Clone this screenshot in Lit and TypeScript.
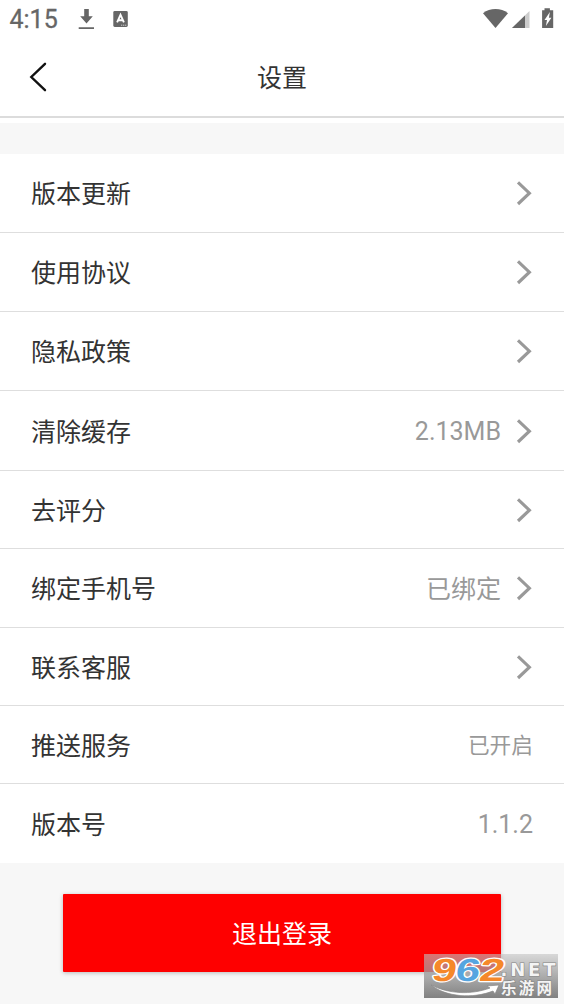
import { LitElement, html, css, svg, nothing } from "lit";
import { customElement, property } from "lit/decorators.js";

interface Row {
  label: string;
  value?: string;
  arrow?: boolean;
  small?: boolean;
  height: number;
}

const ROWS: Row[] = [
  { label: "版本更新", arrow: true, height: 79 },
  { label: "使用协议", arrow: true, height: 79 },
  { label: "隐私政策", arrow: true, height: 79 },
  { label: "清除缓存", value: "2.13MB", arrow: true, height: 80 },
  { label: "去评分", arrow: true, height: 78 },
  { label: "绑定手机号", value: "已绑定", arrow: true, height: 79 },
  { label: "联系客服", arrow: true, height: 78 },
  { label: "推送服务", value: "已开启", small: true, height: 78 },
  { label: "版本号", value: "1.1.2", height: 79 },
];

@customElement("status-bar")
class StatusBar extends LitElement {
  static styles = css`
    :host {
      display: flex;
      align-items: flex-start;
      height: 38px;
      color: #666;
    }
    .clock {
      font: 400 25px/28px Roboto, sans-serif;
      -webkit-text-stroke: 0.3px #666;
      width: 69px;
      padding: 6px 0 0 9.5px;
      box-sizing: border-box;
    }
    .left {
      flex: 1;
    }
    svg {
      display: block;
    }
  `;
  render() {
    return html`
      <div class="clock">4:15</div>
      <svg class="left" height="38" viewBox="69 0 200 38" preserveAspectRatio="xMinYMin" fill="#666">
        <path d="M84.2 9h4.6v7.3h4L86.5 23.4 80.2 16.3h4zM78.7 27.2h15.3v1.9H78.7z" />
        <rect x="113.3" y="11" width="14.5" height="16" rx="1.4" />
        <path d="M117.1 22.4l3.4-7.6 3.4 7.6M118.4 20.3h4.2" fill="none" stroke="#fff" stroke-width="1.9" />
        <path d="M121 25.2h6" stroke="#ccc" stroke-width="1" stroke-dasharray="1.3 .7" />
      </svg>
      <svg width="84" height="38" viewBox="480 0 84 38" fill="#666">
        <path d="M483 13.2C490 7.7 501 7.7 508 13.2L495.5 28z" />
        <path d="M529.5 11v17H512z" fill="#ccc" />
        <path d="M525 15.4V28H512z" />
        <path d="M544.5 8.2h5.4v2h3.3V28h-11.1V10.2h2.4z" />
        <path d="M549.9 12l-5.4 8.1h2.5l-1.1 5.8 5.5-8.2h-2.5z" fill="#fff" />
      </svg>
    `;
  }
}

@customElement("setting-row")
class SettingRow extends LitElement {
  @property({ attribute: false }) row!: Row;
  static styles = css`
    :host {
      display: flex;
      align-items: center;
      box-sizing: border-box;
      padding: 0 31px 0 31px;
      background: #fff;
      border-bottom: 1px solid #dedede;
      font: 25px/36px Roboto, "Noto Sans CJK SC", sans-serif;
      color: #333;
    }
    :host(:last-child) {
      border-bottom: 0;
    }
    .label {
      flex: 1;
      padding-top: 4px;
    }
    .value {
      color: #999;
      padding-top: 3px;
    }
    .small {
      font-size: 21.7px;
    }
    .arrow {
      margin: 0 1px 0 14px;
    }
  `;
  render() {
    const r = this.row;
    return html`
      <span class="label">${r.label}</span>
      ${r.value ? html`<span class="value ${r.small ? "small" : ""}">${r.value}</span>` : nothing}
      ${r.arrow
        ? html`<svg class="arrow" width="17" height="26" viewBox="0 0 17 26" fill="none">
            <path d="M3 2.4L14.4 13.2 3 24" stroke="#999" stroke-width="3.1" />
          </svg>`
        : nothing}
    `;
  }
}

@customElement("site-mark")
class SiteMark extends LitElement {
  static styles = css`
    :host {
      display: block;
      width: 134px;
      height: 44px;
      background: linear-gradient(rgba(195, 195, 195, 0.6), rgba(125, 125, 125, 0.97));
    }
    svg {
      display: block;
      overflow: visible;
    }
    .num {
      font: 700 32px "Liberation Sans", sans-serif;
      stroke: #fff;
      stroke-width: 2.4px;
      paint-order: stroke;
      stroke-linejoin: round;
    }
    .net {
      font: 700 18px "DejaVu Sans", sans-serif;
    }
    .cn {
      font: 700 15.5px "Liberation Sans", "Noto Sans CJK SC", sans-serif;
    }
    .light {
      fill: #f4f4f4;
      stroke: #858585;
      stroke-width: 1.2px;
      paint-order: stroke;
    }
  `;
  render() {
    return html`<svg width="134" height="44" viewBox="0 0 134 44">
      ${svg`
        <path d="M7 31C22 43 49 45 69 37l2 3 4-9-12 1 3 2C47 41 25 40 7 31z" fill="#fff" stroke="#888" stroke-width=".7" />
        <g class="num" transform="translate(5 0) skewX(-9)">
          <text x="6" y="27" textLength="24.5" lengthAdjust="spacingAndGlyphs" fill="#f5882a">9</text>
          <text x="29.5" y="27" textLength="24.5" lengthAdjust="spacingAndGlyphs" fill="#55a5e0">6</text>
          <text x="53.5" y="27" textLength="25" lengthAdjust="spacingAndGlyphs" fill="#f5882a">2</text>
        </g>
        <text class="net light" x="76.5" y="22" textLength="55" lengthAdjust="spacing">.NET</text>
        <text class="cn light" x="77" y="40" textLength="51" lengthAdjust="spacing">乐游网</text>
      `}
    </svg>`;
  }
}

@customElement("app-root")
class AppRoot extends LitElement {
  static styles = css`
    :host {
      display: flex;
      flex-direction: column;
      position: relative;
      height: 1004px;
      overflow: hidden;
      background: #f7f7f7;
      font-family: Roboto, "Noto Sans CJK SC", sans-serif;
    }
    .top {
      background: #fff;
    }
    .nav {
      display: grid;
      grid-template-columns: 80px 1fr 80px;
      align-items: center;
      height: 78px;
      border-bottom: 2px solid #dcdcdc;
    }
    .back {
      margin-left: 28px;
    }
    .title {
      text-align: center;
      font-size: 25px;
      line-height: 36px;
      padding-top: 4px;
      color: #333;
    }
    .strip {
      height: 5px;
      background: #fff;
    }
    .list {
      margin-top: 31px;
      display: flex;
      flex-direction: column;
    }
    .logout {
      width: 438px;
      height: 78px;
      margin: 31px 0 0 63px;
      padding: 0 0 2px;
      border: 0;
      border-radius: 1px;
      background: #fe0000;
      color: #fff;
      font: 25px/36px "Noto Sans CJK SC", sans-serif;
      box-shadow: 0 1px 4px rgba(0, 0, 0, 0.25);
    }
    site-mark {
      position: absolute;
      right: 6px;
      bottom: 6px;
    }
  `;
  render() {
    return html`
      <header class="top">
        <status-bar></status-bar>
        <nav class="nav">
          <svg class="back" width="20" height="30" viewBox="0 0 20 30" fill="none">
            <path d="M17 1.8L3.3 15 17 28.2" stroke="#111" stroke-width="2.4" stroke-linecap="round" />
          </svg>
          <div class="title">设置</div>
        </nav>
      </header>
      <div class="strip"></div>
      <main class="list">
        ${ROWS.map((r) => html`<setting-row .row=${r} style="height:${r.height}px"></setting-row>`)}
      </main>
      <button class="logout">退出登录</button>
      <site-mark></site-mark>
    `;
  }
}
